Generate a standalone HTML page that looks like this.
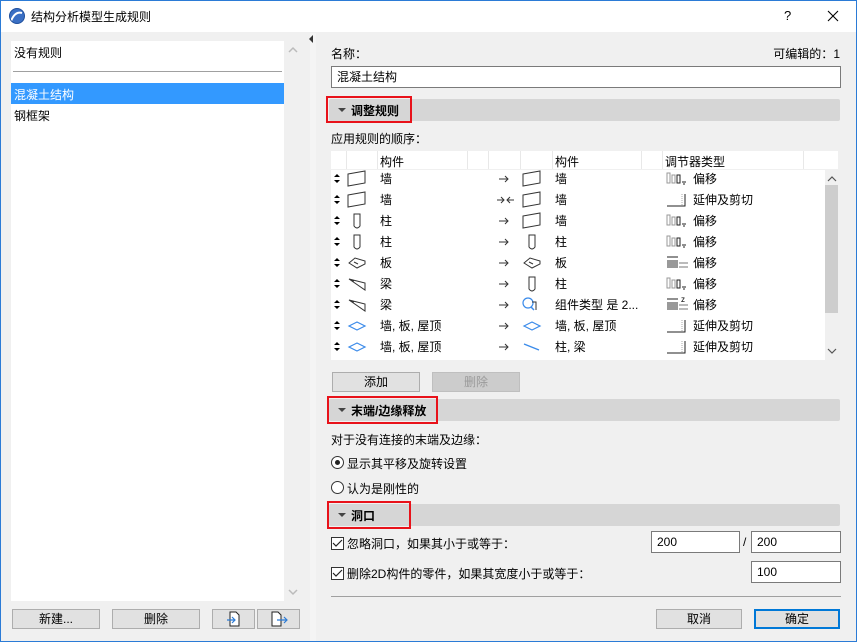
<!DOCTYPE html>
<html><head><meta charset="utf-8">
<style>
*{margin:0;padding:0;box-sizing:border-box}
body{width:857px;height:642px;overflow:hidden;background:#f0f0f0;font-family:"Liberation Sans","Noto Sans CJK SC","Microsoft YaHei",sans-serif;font-size:12px;color:#000;position:relative}
.a{position:absolute;white-space:nowrap}
.cj{font-family:"Noto Sans CJK SC",sans-serif}
.btn{position:absolute;background:#e1e1e1;border:1px solid #adadad;text-align:center;line-height:18px;height:20px}
.hdr{position:absolute;left:329px;width:511px;height:22px;background:#d6d6d6;border-radius:2px}
.hdr b{position:absolute;left:22px;top:3px;font-size:12px}
.hdr i{position:absolute;left:9px;top:9px;width:0;height:0;border-left:4px solid transparent;border-right:4px solid transparent;border-top:4px solid #444}
.red{position:absolute;border:2px solid #e8121a}
.inp{position:absolute;background:#fff;border:1px solid #7a7a7a;height:22px;line-height:20px;padding-left:5px}
.cb{position:absolute;width:13px;height:13px;border:1px solid #333;background:#fff}
</style></head><body>
<div class="a" style="left:0;top:0;width:857px;height:642px;border:1px solid #2b7bd6;"></div>
<div class="a" style="left:1px;top:1px;width:855px;height:31px;background:#fff"></div>
<svg class="a" style="left:9px;top:8px" width="16" height="16" viewBox="0 0 16 16"><circle cx="8" cy="8" r="7.5" fill="#3a6fc4"/><path d="M2 13 Q6 3 13 5" stroke="#fff" stroke-width="2" fill="none"/><circle cx="8" cy="8" r="7.5" fill="none" stroke="#1f4f9c"/></svg>
<div class="a" style="left:31px;top:8px;font-size:12px">结构分析模型生成规则</div>
<div class="a" style="left:784px;top:8px;font-size:13px">?</div>
<svg class="a" style="left:827px;top:10px" width="12" height="12"><path d="M1 1L11 11M11 1L1 11" stroke="#000" stroke-width="1.1"/></svg>

<div class="a" style="left:11px;top:41px;width:273px;height:560px;background:#fff"></div>
<div class="a" style="left:14px;top:44px">没有规则</div>
<div class="a" style="left:13px;top:71px;width:269px;height:1px;background:#a0a0a0"></div>
<div class="a" style="left:11px;top:83px;width:273px;height:21px;background:#3399ff"></div>
<div class="a" style="left:14px;top:86px;color:#fff">混凝土结构</div>
<div class="a" style="left:14px;top:107px">钢框架</div>
<svg class="a" style="left:288px;top:46px" width="10" height="8"><path d="M1 6L5 2L9 6" stroke="#bbb" fill="none" stroke-width="1.5"/></svg>
<svg class="a" style="left:288px;top:588px" width="10" height="8"><path d="M1 2L5 6L9 2" stroke="#bbb" fill="none" stroke-width="1.5"/></svg>
<div class="a" style="left:310px;top:33px;width:6px;height:608px;background:#f4f4f4"></div>
<div class="a" style="left:309px;top:35px;width:0;height:0;border-top:4px solid transparent;border-bottom:4px solid transparent;border-right:4px solid #333"></div>

<div class="btn" style="left:12px;top:609px;width:88px">新建...</div>
<div class="btn" style="left:112px;top:609px;width:88px">删除</div>
<div class="btn" style="left:212px;top:609px;width:43px"><svg width="14" height="16" style="margin-top:1px"><path d="M3 1H9L12 4V15H3Z" fill="#fff" stroke="#222"/><path d="M0 9H8M5 6L8 9L5 12" stroke="#2b7bd6" fill="none" stroke-width="1.2"/></svg></div>
<div class="btn" style="left:257px;top:609px;width:43px"><svg width="18" height="16" style="margin-top:1px"><path d="M2 1H8L11 4V15H2Z" fill="#fff" stroke="#222"/><path d="M7 9H17M14 6L17 9L14 12" stroke="#2b7bd6" fill="none" stroke-width="1.2"/></svg></div>

<div class="a" style="left:331px;top:45px">名称<span class="cj">：</span></div>
<div class="a" style="right:17px;top:45px">可编辑的<span class="cj">：</span>1</div>
<div class="inp" style="left:331px;top:66px;width:510px">混凝土结构</div>

<div class="hdr" style="top:99px"><i></i><b>调整规则</b></div>
<div class="red" style="left:326px;top:96px;width:86px;height:27px"></div>
<div class="a" style="left:331px;top:130px">应用规则的顺序<span class="cj">：</span></div>

<div class="a" style="left:331px;top:151px;width:507px;height:209px;background:#fff"></div>
<div class="a" style="left:331px;top:151px;width:494px;height:19px;background:#fff;border-bottom:1px solid #f0f0f0"></div>
<div class="a" style="left:346px;top:151px;width:1px;height:18px;background:#e8e8e8"></div>
<div class="a" style="left:377px;top:151px;width:1px;height:18px;background:#e8e8e8"></div>
<div class="a" style="left:467px;top:151px;width:1px;height:18px;background:#e8e8e8"></div>
<div class="a" style="left:488px;top:151px;width:1px;height:18px;background:#e8e8e8"></div>
<div class="a" style="left:520px;top:151px;width:1px;height:18px;background:#e8e8e8"></div>
<div class="a" style="left:552px;top:151px;width:1px;height:18px;background:#e8e8e8"></div>
<div class="a" style="left:641px;top:151px;width:1px;height:18px;background:#e8e8e8"></div>
<div class="a" style="left:662px;top:151px;width:1px;height:18px;background:#e8e8e8"></div>
<div class="a" style="left:803px;top:151px;width:1px;height:18px;background:#e8e8e8"></div>
<div class="a" style="left:380px;top:153px">构件</div>
<div class="a" style="left:555px;top:153px">构件</div>
<div class="a" style="left:665px;top:153px">调节器类型</div>
<div class="a" style="left:825px;top:169px;width:13px;height:191px;background:#f0f0f0"></div>
<div class="a" style="left:825px;top:185px;width:13px;height:128px;background:#cdcdcd"></div>
<svg class="a" style="left:827px;top:175px" width="10" height="7"><path d="M1 6L5 2L9 6" stroke="#555" fill="none" stroke-width="1.2"/></svg>
<svg class="a" style="left:827px;top:348px" width="10" height="7"><path d="M1 1L5 5L9 1" stroke="#555" fill="none" stroke-width="1.2"/></svg>

<svg class="a" style="left:331px;top:169px" width="494" height="190" font-family="Liberation Sans, Noto Sans CJK SC, sans-serif" font-size="12">
<defs>
<g id="ud"><path d="M3 -2L6 -5L9 -2Z M3 1L6 4L9 1Z" fill="#000"/></g>
<g id="ar"><path d="M0 0H9M6 -3L9 0L6 3" fill="none" stroke="#333"/></g>
<g id="ar2"><path d="M0 0H7M4 -3L7 0L4 3M17 0H10M13 -3L10 0L13 3" fill="none" stroke="#333"/></g>
<g id="wall"><path d="M0 -5L17 -8L17 4L0 7Z" fill="#fff" stroke="#333"/></g>
<g id="col"><path d="M0 -7H6V5Q3 9 0 5Z" fill="#fff" stroke="#333"/></g>
<g id="slab"><path d="M0 0L6 -5L16 -2L16 1L8 5Z" fill="#fff" stroke="#333"/><path d="M5 -1L9 1" stroke="#333"/></g>
<g id="beam"><path d="M0 -5L16 -1L16 6Z M0 -5L5 -3" fill="#fff" stroke="#333"/></g>
<g id="blue"><path d="M0 0L8 -4L16 0L8 4Z" fill="#fff" stroke="#3b8bea" stroke-width="1.2"/></g>
<g id="off"><rect x="0" y="-6" width="3" height="10" fill="none" stroke="#999"/><rect x="5" y="-4" width="3" height="8" fill="none" stroke="#999"/><rect x="10" y="-4" width="3" height="8" fill="#fff" stroke="#222"/><path d="M15 3H19M16 5H18" stroke="#222"/></g>
<g id="ext"><path d="M0 6H18V-6" fill="none" stroke="#222"/><path d="M15 -6V6" stroke="#aaa" stroke-dasharray="1 1"/></g>
<g id="hat"><path d="M0 -6H11" stroke="#222"/><rect x="0" y="-3" width="11" height="8" fill="#999"/><path d="M12 0H21M12 4H21" stroke="#bbb" stroke-width="2"/></g>
</defs>
<g transform="translate(0,10)"><use href="#ud"/><use href="#wall" x="17"/><text x="49" y="4">墙</text><use href="#ar" x="168"/><use href="#wall" x="192"/><text x="224" y="4">墙</text><use href="#off" x="336"/><text x="362" y="4">偏移</text></g>
<g transform="translate(0,31)"><use href="#ud"/><use href="#wall" x="17"/><text x="49" y="4">墙</text><use href="#ar2" x="166"/><use href="#wall" x="192"/><text x="224" y="4">墙</text><use href="#ext" x="336"/><text x="362" y="4">延伸及剪切</text></g>
<g transform="translate(0,52)"><use href="#ud"/><use href="#col" x="23"/><text x="49" y="4">柱</text><use href="#ar" x="168"/><use href="#wall" x="192"/><text x="224" y="4">墙</text><use href="#off" x="336"/><text x="362" y="4">偏移</text></g>
<g transform="translate(0,73)"><use href="#ud"/><use href="#col" x="23"/><text x="49" y="4">柱</text><use href="#ar" x="168"/><use href="#col" x="198"/><text x="224" y="4">柱</text><use href="#off" x="336"/><text x="362" y="4">偏移</text></g>
<g transform="translate(0,94)"><use href="#ud"/><use href="#slab" x="18"/><text x="49" y="4">板</text><use href="#ar" x="168"/><use href="#slab" x="193"/><text x="224" y="4">板</text><use href="#hat" x="336"/><text x="362" y="4">偏移</text></g>
<g transform="translate(0,115)"><use href="#ud"/><use href="#beam" x="18"/><text x="49" y="4">梁</text><use href="#ar" x="168"/><use href="#col" x="198"/><text x="224" y="4">柱</text><use href="#off" x="336"/><text x="362" y="4">偏移</text></g>
<g transform="translate(0,136)"><use href="#ud"/><use href="#beam" x="18"/><text x="49" y="4">梁</text><use href="#ar" x="168"/><circle cx="197" cy="-2" r="5" fill="none" stroke="#3b8bea" stroke-width="1.2"/><path d="M200 2L203 5" stroke="#3b8bea" stroke-width="1.5"/><path d="M201 -3H205V5" stroke="#333" fill="none"/><text x="224" y="4">组件类型 是 2...</text><use href="#hat" x="336"/><text x="350" y="-3" font-size="8">z</text><text x="362" y="4">偏移</text></g>
<g transform="translate(0,157)"><use href="#ud"/><use href="#blue" x="18"/><text x="49" y="4">墙, 板, 屋顶</text><use href="#ar" x="168"/><use href="#blue" x="193"/><text x="224" y="4">墙, 板, 屋顶</text><use href="#ext" x="336"/><text x="362" y="4">延伸及剪切</text></g>
<g transform="translate(0,178)"><use href="#ud"/><use href="#blue" x="18"/><text x="49" y="4">墙, 板, 屋顶</text><use href="#ar" x="168"/><path d="M193 -3L208 3" stroke="#3b8bea" stroke-width="1.3"/><text x="224" y="4">柱, 梁</text><use href="#ext" x="336"/><text x="362" y="4">延伸及剪切</text></g>
</svg>

<div class="btn" style="left:332px;top:372px;width:88px">添加</div>
<div class="btn" style="left:432px;top:372px;width:88px;background:#cccccc;border-color:#bfbfbf;color:#9a9a9a">删除</div>

<div class="hdr" style="top:399px"><i></i><b>末端/边缘释放</b></div>
<div class="red" style="left:327px;top:396px;width:111px;height:28px"></div>
<div class="a" style="left:331px;top:431px">对于没有连接的末端及边缘<span class="cj">：</span></div>
<div class="a" style="left:331px;top:456px;width:13px;height:13px;border:1px solid #333;border-radius:50%;background:#fff"></div>
<div class="a" style="left:335px;top:460px;width:5px;height:5px;border-radius:50%;background:#222"></div>
<div class="a" style="left:347px;top:455px">显示其平移及旋转设置</div>
<div class="a" style="left:331px;top:481px;width:13px;height:13px;border:1px solid #333;border-radius:50%;background:#fff"></div>
<div class="a" style="left:347px;top:480px">认为是刚性的</div>

<div class="hdr" style="top:504px"><i></i><b>洞口</b></div>
<div class="red" style="left:327px;top:501px;width:84px;height:28px"></div>
<div class="cb" style="left:331px;top:537px"></div>
<svg class="a" style="left:332px;top:538px" width="11" height="11"><path d="M1 5L4 8L10 2" stroke="#222" fill="none" stroke-width="1.2"/></svg>
<div class="a" style="left:347px;top:535px">忽略洞口<span class="cj">，</span>如果其小于或等于<span class="cj">：</span></div>
<div class="inp" style="left:651px;top:531px;width:89px">200</div>
<div class="a" style="left:743px;top:535px">/</div>
<div class="inp" style="left:751px;top:531px;width:90px">200</div>
<div class="cb" style="left:331px;top:567px"></div>
<svg class="a" style="left:332px;top:568px" width="11" height="11"><path d="M1 5L4 8L10 2" stroke="#222" fill="none" stroke-width="1.2"/></svg>
<div class="a" style="left:347px;top:565px">删除2D构件的零件<span class="cj">，</span>如果其宽度小于或等于<span class="cj">：</span></div>
<div class="inp" style="left:751px;top:561px;width:90px">100</div>

<div class="a" style="left:331px;top:596px;width:510px;height:1px;background:#a0a0a0"></div>
<div class="btn" style="left:656px;top:609px;width:86px">取消</div>
<div class="btn" style="left:754px;top:609px;width:86px;border:2px solid #0078d7;line-height:16px">确定</div>
</body></html>
